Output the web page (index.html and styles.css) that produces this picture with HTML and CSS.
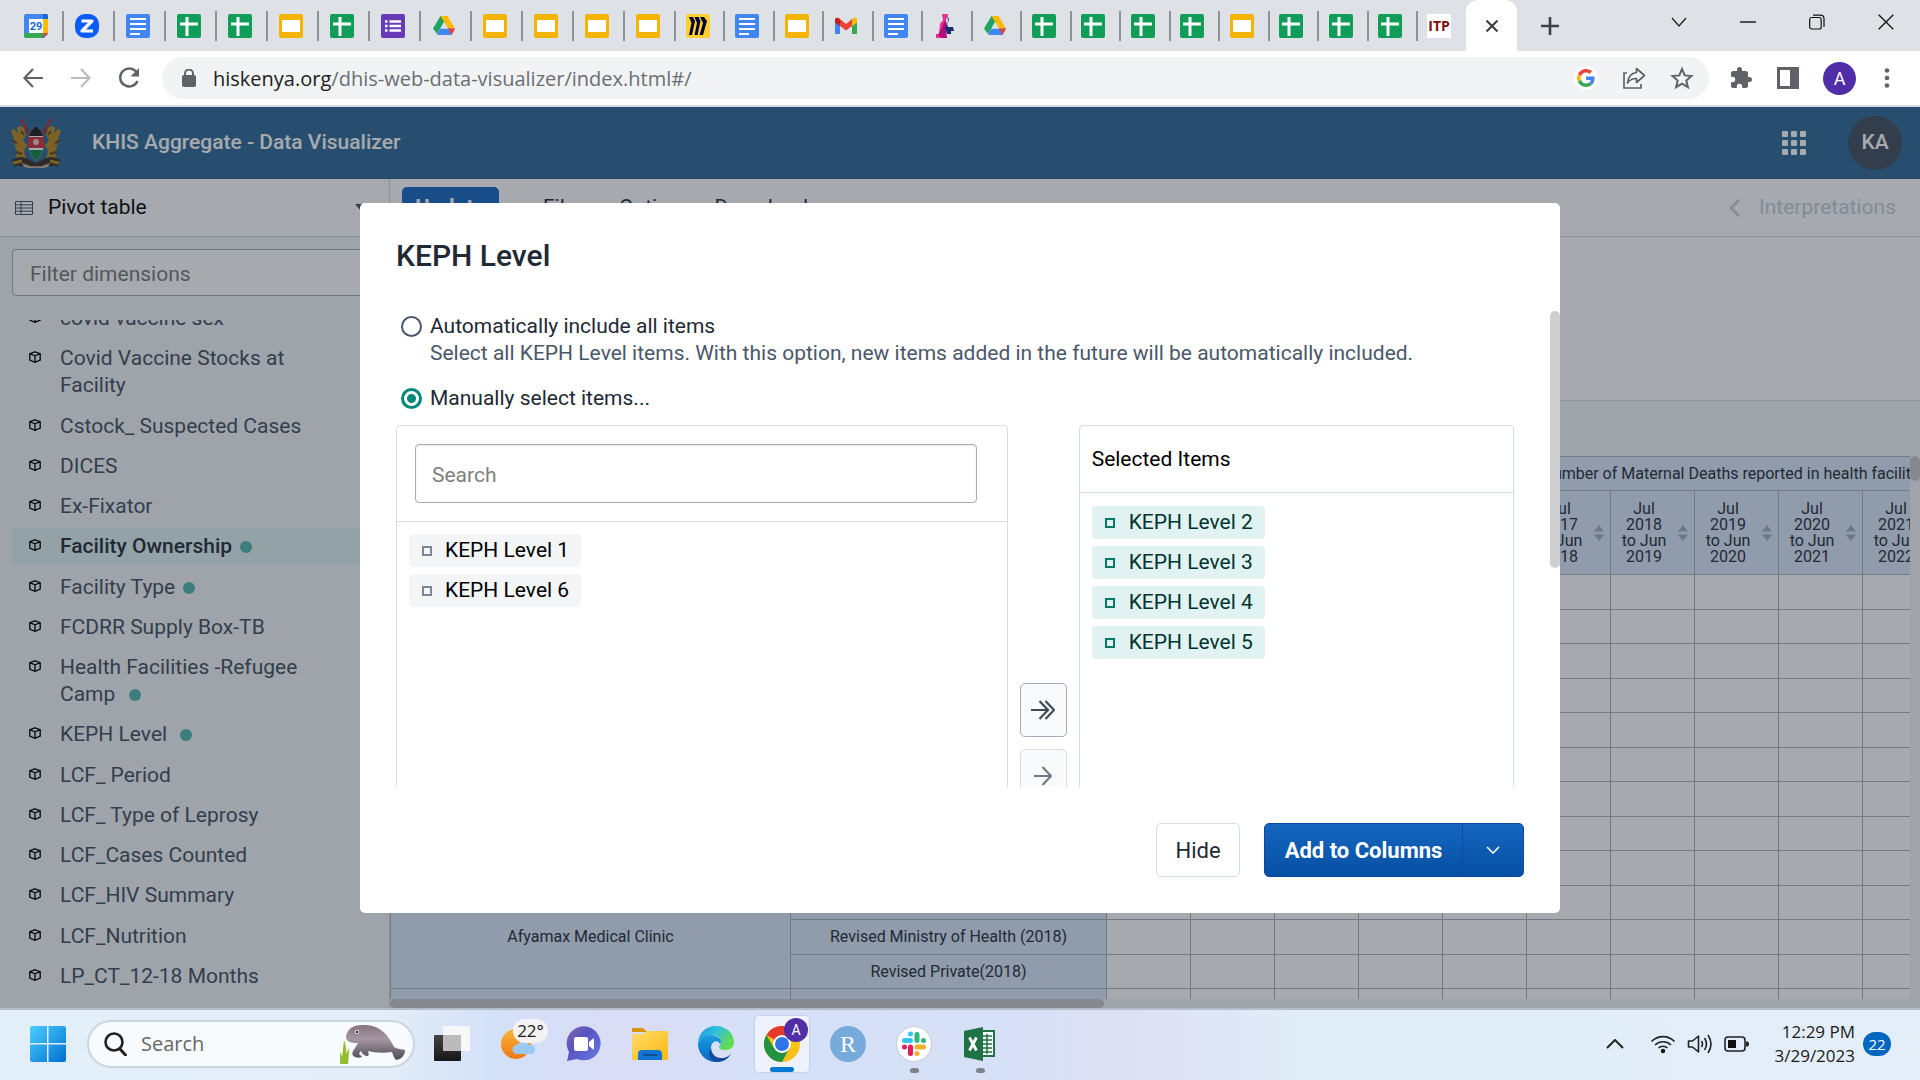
FILE: index.html
```html
<!DOCTYPE html>
<html lang="en">
<head>
<meta charset="utf-8">
<title>KHIS Aggregate - Data Visualizer</title>
<link rel="stylesheet" href="styles.css">
</head>
<body>
<svg class="sprite" aria-hidden="true">
  <symbol id="docs" viewBox="0 0 24 24"><rect width="24" height="24" rx="2" fill="#4285f4"/><path d="M4 5h16M4 10h16M4 15h16M4 20h10" stroke="#fff" stroke-width="2.2"/></symbol>
  <symbol id="sheets" viewBox="0 0 24 24"><rect width="24" height="24" rx="2" fill="#0f9d58"/><path d="M3 10h18M10 3v19" stroke="#fff" stroke-width="3"/></symbol>
  <symbol id="slides" viewBox="0 0 24 24"><rect width="24" height="24" rx="2" fill="#f4b400"/><path d="M3 6h18v12H3z" fill="#fff"/></symbol>
  <symbol id="drive" viewBox="0 0 24 24"><path d="M8.500 2h7L12 8.200 5 20 1 14.500z" fill="#1fa463"/><path d="M8.500 2h7L23 14.500h-7z" fill="#ffba00"/><path d="M8.200 14.500H23L19.500 21H5z" fill="#4285f4"/><path d="M16 14.500h7L19.500 21z" fill="#ea4335"/><path d="M12 8.300l3.600 6.200H8.400z" fill="#dee1e6"/></symbol>
  <symbol id="cube" viewBox="0 0 12 12"><path d="M6 .8l5.200 1.900v6.400L6 11.300.8 9.100V2.700zM.8 2.700L6 4.800l5.200-2.100M6 4.800v6.500" fill="none" stroke="#000" stroke-width="1.400"/></symbol>
  <symbol id="sort" viewBox="0 0 10 16"><path d="M5 0l5 6.500H0zM0 9.500h10L5 16z" fill="#a0adba"/></symbol>
</svg>

<header class="browser">
  <div class="tabstrip">
    <nav class="tabs tabs-wide" aria-label="Pinned tabs">
      <button class="tab" aria-label="Calendar"><svg viewBox="0 0 24 24"><path d="M0 2q0-2 2-2h20q2 0 2 2v18l-4 4H2q-2 0-2-2z" fill="#4285f4"/><path d="M19 5h5v14h-5z" fill="#fbbc04"/><path d="M5 19h14v5H2q-2 0-2-2v-3z" fill="#34a853"/><path d="M19 19h5l-5 5z" fill="#ea4335"/><path d="M19 0h3q2 0 2 2v3h-5z" fill="#1967d2"/><path d="M5 5h14v14H5z" fill="#fff"/><text x="12" y="16" class="cal-day">29</text></svg></button>
      <button class="tab" aria-label="Zoom"><svg viewBox="0 0 24 24"><rect width="24" height="24" rx="10" fill="#0b5cff"/><path d="M6.500 7h10.500l-10 10h11" fill="none" stroke="#fff" stroke-width="3.200" stroke-linejoin="round"/></svg></button>
      <button class="tab" aria-label="Docs"><svg><use href="#docs"/></svg></button>
      <button class="tab" aria-label="Sheets"><svg><use href="#sheets"/></svg></button>
      <button class="tab" aria-label="Sheets"><svg><use href="#sheets"/></svg></button>
      <button class="tab" aria-label="Slides"><svg><use href="#slides"/></svg></button>
      <button class="tab" aria-label="Sheets"><svg><use href="#sheets"/></svg></button>
      <button class="tab" aria-label="Forms"><svg viewBox="0 0 24 24"><rect width="24" height="24" rx="2" fill="#673ab7"/><path d="M8.500 7.500H20M8.500 12H20M8.500 16.500H20M4 7.500h2.500M4 12h2.500M4 16.500h2.500" stroke="#fff" stroke-width="2.400"/></svg></button>
      <button class="tab" aria-label="Drive"><svg><use href="#drive"/></svg></button>
      <button class="tab" aria-label="Slides"><svg><use href="#slides"/></svg></button>
      <button class="tab" aria-label="Slides"><svg><use href="#slides"/></svg></button>
      <button class="tab" aria-label="Slides"><svg><use href="#slides"/></svg></button>
      <button class="tab" aria-label="Slides"><svg><use href="#slides"/></svg></button>
    </nav>
    <nav class="tabs tabs-narrow" aria-label="Open tabs">
      <button class="tab" aria-label="Miro"><svg viewBox="0 0 24 24"><rect width="24" height="24" rx="2" fill="#ffd02f"/><path d="M3 3h4l2 4-3 14H3l2.500-12zM8.500 3h4l2 4-3 14h-3L11 9zM14 3h4l3 4-4 14h-3.500L17 9z" fill="#050038"/></svg></button>
      <button class="tab" aria-label="Docs"><svg><use href="#docs"/></svg></button>
      <button class="tab" aria-label="Slides"><svg><use href="#slides"/></svg></button>
      <button class="tab" aria-label="Gmail"><svg viewBox="0 0 24 24"><path d="M1 6v14h5V10z" fill="#4285f4"/><path d="M23 6v14h-5V10z" fill="#34a853"/><path d="M18 5l2-1.200q3-1 3 2.200v2.500L18 12z" fill="#fbbc04"/><path d="M6 5L4 3.800Q1 3 1 6v2.500L6 12z" fill="#c5221f"/><path d="M6 5l6 5 6-5v7l-6 4.500L6 12z" fill="#ea4335"/></svg></button>
      <button class="tab" aria-label="Docs"><svg><use href="#docs"/></svg></button>
      <button class="tab" aria-label="Lighthouse"><svg viewBox="0 0 24 24"><path d="M9 0h6l-3 9 1 10v5H3v-4h3L7 10l3-4z" fill="#ec2f91"/><path d="M12 6l2 4-1 6 1 8H9l-4-3 4-8z" fill="#b30c78"/><path d="M14 0l2 6-2 4 1 3h5l1 4h-3v3h-4l-2-6 3-7z" fill="#1b2d70"/></svg></button>
      <button class="tab" aria-label="Drive"><svg><use href="#drive"/></svg></button>
      <button class="tab" aria-label="Sheets"><svg><use href="#sheets"/></svg></button>
      <button class="tab" aria-label="Sheets"><svg><use href="#sheets"/></svg></button>
      <button class="tab" aria-label="Sheets"><svg><use href="#sheets"/></svg></button>
      <button class="tab" aria-label="Sheets"><svg><use href="#sheets"/></svg></button>
      <button class="tab" aria-label="Slides"><svg><use href="#slides"/></svg></button>
      <button class="tab" aria-label="Sheets"><svg><use href="#sheets"/></svg></button>
      <button class="tab" aria-label="Sheets"><svg><use href="#sheets"/></svg></button>
      <button class="tab" aria-label="Sheets"><svg><use href="#sheets"/></svg></button>
      <button class="tab" aria-label="ITP"><span class="itp">ITP</span></button>
    </nav>
    <button class="tab-active" aria-label="Close tab"><svg width="14" height="14" viewBox="0 0 14 14"><path d="M1.500 1.500l11 11m0-11l-11 11" stroke="#3c4043" stroke-width="2.200"/></svg></button>
    <button class="new-tab" aria-label="New tab"><svg width="18" height="18" viewBox="0 0 18 18"><path d="M9 0v18M0 9h18" stroke="#3c4043" stroke-width="2.600"/></svg></button>
    <div class="window-controls">
      <button aria-label="Search tabs"><svg width="16" height="16" viewBox="0 0 16 16"><path d="M1 4l7 8 7-8" fill="none" stroke="#222" stroke-width="1.300"/></svg></button>
      <button aria-label="Minimise"><svg width="16" height="16" viewBox="0 0 16 16"><path d="M0 8h16" stroke="#111" stroke-width="1.400"/></svg></button>
      <button aria-label="Restore"><svg width="16" height="16" viewBox="0 0 16 16"><rect x=".7" y="3.500" width="11.500" height="11.500" rx="2" fill="none" stroke="#111" stroke-width="1.200"/><path d="M4 1.200h7.500q3.500 0 3.500 3.500V13" fill="none" stroke="#111" stroke-width="1.200"/></svg></button>
      <button aria-label="Close"><svg width="16" height="16" viewBox="0 0 16 16"><path d="M.7.700l14.600 14.600M15.300.700L.7 15.300" stroke="#111" stroke-width="1.300"/></svg></button>
    </div>
  </div>
  <div class="toolbar">
    <div class="nav-buttons">
      <button aria-label="Back"><svg width="20" height="20" viewBox="0 0 20 20"><path d="M20 10H2M10 1L1.500 10l8.500 9" fill="none" stroke="#5f6368" stroke-width="2.200"/></svg></button>
      <button aria-label="Forward" disabled><svg width="20" height="20" viewBox="0 0 20 20"><path d="M0 10h18M10 1l8.500 9-8.500 9" fill="none" stroke="#babcbe" stroke-width="2.200"/></svg></button>
      <button aria-label="Reload"><svg width="22" height="22" viewBox="0 0 22 22"><path d="M19 6A9 9 0 1 0 19.500 14" fill="none" stroke="#5f6368" stroke-width="2.400"/><path d="M21 1v8.500h-8.500z" fill="#5f6368"/></svg></button>
    </div>
    <div class="omnibox">
      <svg width="14" height="18" viewBox="0 0 14 18"><rect y="6" width="14" height="12" rx="2" fill="#5f6368"/><path d="M3 7V4.500a4 4 0 0 1 8 0V7" fill="none" stroke="#5f6368" stroke-width="2"/></svg>
      <p class="url"><b>hiskenya.org</b>/dhis-web-data-visualizer/index.html#/</p>
      <button class="g" aria-label="Google Search"><svg width="18" height="18" viewBox="0 0 48 48"><path fill="#EA4335" d="M24 9.500c3.540 0 6.710 1.220 9.210 3.600l6.850-6.850C35.900 2.380 30.470 0 24 0 14.620 0 6.510 5.380 2.560 13.220l7.980 6.190C12.430 13.720 17.740 9.500 24 9.500z"/><path fill="#4285F4" d="M46.980 24.550c0-1.570-.15-3.090-.38-4.550H24v9.020h12.940c-.58 2.960-2.260 5.480-4.780 7.180l7.730 6c4.510-4.180 7.090-10.360 7.090-17.650z"/><path fill="#FBBC05" d="M10.530 28.590c-.48-1.450-.76-2.990-.76-4.590s.27-3.140.76-4.590l-7.980-6.190C.92 16.460 0 20.120 0 24c0 3.880.92 7.540 2.560 10.780l7.970-6.190z"/><path fill="#34A853" d="M24 48c6.480 0 11.930-2.130 15.890-5.810l-7.730-6c-2.150 1.450-4.920 2.300-8.160 2.300-6.260 0-11.570-4.220-13.470-9.910l-7.980 6.190C6.510 42.620 14.620 48 24 48z"/></svg></button>
      <button aria-label="Share"><svg width="24" height="24" viewBox="0 0 24 24"><path d="M5 7H2v15h17v-4" fill="none" stroke="#5f6368" stroke-width="1.700"/><path d="M14.500 2.500l8 7-8 7v-4q-6 0-9 4.500 1-9.500 9-10.500z" fill="none" stroke="#5f6368" stroke-width="1.700" stroke-linejoin="round"/></svg></button>
      <button aria-label="Bookmark"><svg width="24" height="24" viewBox="0 0 24 24"><path d="M12 3l2.700 6.400 6.800.600-5.200 4.500 1.600 6.700L12 17.600l-5.900 3.600 1.600-6.700L2.500 10l6.800-.600z" fill="none" stroke="#5f6368" stroke-width="2"/></svg></button>
    </div>
    <div class="extensions">
      <button aria-label="Extensions"><svg width="24" height="24" viewBox="0 0 24 24"><path fill="#5f6368" d="M20.500 11H19V7c0-1.100-.9-2-2-2h-4V3.500a2.500 2.500 0 0 0-5 0V5H4c-1.100 0-2 .9-2 2v3.800h1.500a2.700 2.700 0 0 1 0 5.400H2V20c0 1.100.9 2 2 2h3.800v-1.500a2.700 2.700 0 0 1 5.400 0V22H17c1.100 0 2-.9 2-2v-4h1.500a2.500 2.500 0 0 0 0-5z"/></svg></button>
      <button aria-label="Side panel"><svg width="22" height="22" viewBox="0 0 22 22"><path fill="#5f6368" fill-rule="evenodd" d="M0 0h22v22H0zM3 3v16h10V3z"/></svg></button>
      <button class="profile" aria-label="Profile">A</button>
      <button aria-label="Menu"><svg width="6" height="20" viewBox="0 0 6 20"><circle cx="3" cy="2.500" r="2.300" fill="#5f6368"/><circle cx="3" cy="10" r="2.300" fill="#5f6368"/><circle cx="3" cy="17.500" r="2.300" fill="#5f6368"/></svg></button>
    </div>
  </div>
</header>

<div class="app">
  <header class="dhis-header">
    <a class="crest" href="#" aria-label="Home"><svg width="54" height="50" viewBox="0 0 54 50">
      <path d="M12 1l14 26M42 1L28 27" stroke="#b5282f" stroke-width="2.500"/>
      <path d="M4 18q-4-6 1-7l4 4-1-6q4-2 7 1l2 7-3 5 4 5-3 6 3 11H5l3-8-2-9z" fill="#b9851c"/>
      <path d="M50 18q4-6-1-7l-4 4 1-6q-4-2-7 1l-2 7 3 5-4 5 3 6-3 11h13l-3-8 2-9z" fill="#b9851c"/>
      <path d="M3 22l5 3M7 34l6 2M51 22l-5 3M47 34l-6 2M12 13l3 4M42 13l-3 4" stroke="#5d3d10" stroke-width="2"/>
      <path d="M27 8q8 7 8 17t-8 18q-8-8-8-18T27 8z" fill="#fff"/>
      <path d="M27 8q5 4 7 10H20q2-6 7-10z" fill="#16181a"/><path d="M19 19h16v11H19z" fill="#d32f3b"/><path d="M20 32h14q-2 6-7 11-5-5-7-11z" fill="#128040"/>
      <circle cx="27" cy="24" r="3" fill="#f2c6c0"/>
      <path d="M3 42q8-6 18 0l6 3 6-3q10-6 18 0l-2 6H5z" fill="#3a2a20"/><path d="M4 45l9-2M50 45l-9-2" stroke="#b9851c" stroke-width="3"/>
      <path d="M13 45q14 7 28 0l-2 4q-12 3-24 0z" fill="#c9aa9a"/>
    </svg></a>
    <h1>KHIS Aggregate - Data Visualizer</h1>
    <button class="apps" aria-label="Apps"><svg width="24" height="24" viewBox="0 0 24 24" fill="#fff"><rect width="6" height="6" rx="1"/><rect x="9" width="6" height="6" rx="1"/><rect x="18" width="6" height="6" rx="1"/><rect y="9" width="6" height="6" rx="1"/><rect x="9" y="9" width="6" height="6" rx="1"/><rect x="18" y="9" width="6" height="6" rx="1"/><rect y="18" width="6" height="6" rx="1"/><rect x="9" y="18" width="6" height="6" rx="1"/><rect x="18" y="18" width="6" height="6" rx="1"/></svg></button>
    <button class="user">KA</button>
  </header>

  <div class="workspace">
    <aside class="sidebar">
      <button class="vis-type"><svg width="18" height="14" viewBox="0 0 18 14"><path d="M.5.500h17v13H.5zM.5 3.800h17M.5 7h17M.5 10.200h17M6 .500v13" fill="none" stroke="#404b5a"/></svg><span>Pivot table</span><svg width="12" height="7" viewBox="0 0 12 7"><path d="M0 0h12L6 7z" fill="#404b5a"/></svg></button>
      <div class="filter"><input type="text" placeholder="Filter dimensions" aria-label="Filter dimensions"></div>
      <div class="dims">
        <ul>
          <li><svg><use href="#cube"/></svg><span>covid vaccine sex</span></li>
          <li><svg><use href="#cube"/></svg><span>Covid Vaccine Stocks at Facility</span></li>
          <li><svg><use href="#cube"/></svg><span>Cstock_ Suspected Cases</span></li>
          <li><svg><use href="#cube"/></svg><span>DICES</span></li>
          <li><svg><use href="#cube"/></svg><span>Ex-Fixator</span></li>
          <li class="selected"><svg><use href="#cube"/></svg><span>Facility Ownership<i class="dot"></i></span></li>
          <li><svg><use href="#cube"/></svg><span>Facility Type<i class="dot"></i></span></li>
          <li><svg><use href="#cube"/></svg><span>FCDRR Supply Box-TB</span></li>
          <li><svg><use href="#cube"/></svg><span>Health Facilities -Refugee Camp <i class="dot"></i></span></li>
          <li><svg><use href="#cube"/></svg><span>KEPH Level <i class="dot"></i></span></li>
          <li><svg><use href="#cube"/></svg><span>LCF_ Period</span></li>
          <li><svg><use href="#cube"/></svg><span>LCF_ Type of Leprosy</span></li>
          <li><svg><use href="#cube"/></svg><span>LCF_Cases Counted</span></li>
          <li><svg><use href="#cube"/></svg><span>LCF_HIV Summary</span></li>
          <li><svg><use href="#cube"/></svg><span>LCF_Nutrition</span></li>
          <li><svg><use href="#cube"/></svg><span>LP_CT_12-18 Months</span></li>
        </ul>
      </div>
    </aside>

    <main>
      <div class="menubar">
        <button class="update">Update</button>
        <button class="file">File</button>
        <button>Options</button>
        <button>Download</button>
        <button class="interpretations"><svg width="12" height="18" viewBox="0 0 12 18"><path d="M10 1L2 9l8 8" fill="none" stroke="#c2cdd8" stroke-width="2.600"/></svg>Interpretations</button>
      </div>
      <div class="axes"></div>
      <div class="canvas">
        <div class="table-view">
          <table>
            <colgroup><col class="c-unit"><col class="c-owner"><col span="12" class="c-data"></colgroup>
            <thead>
              <tr class="r-metric"><th colspan="2"></th><th colspan="3"></th><th colspan="9">Number of Maternal Deaths reported in health facilities</th></tr>
              <tr class="r-period"><th></th><th></th><th></th><th></th><th></th><th></th><th></th>
                <th><div class="period"><span>Jul 2017 to Jun 2018</span><svg><use href="#sort"/></svg></div></th>
                <th><div class="period"><span>Jul 2018 to Jun 2019</span><svg><use href="#sort"/></svg></div></th>
                <th><div class="period"><span>Jul 2019 to Jun 2020</span><svg><use href="#sort"/></svg></div></th>
                <th><div class="period"><span>Jul 2020 to Jun 2021</span><svg><use href="#sort"/></svg></div></th>
                <th><div class="period"><span>Jul 2021 to Jun 2022</span><svg><use href="#sort"/></svg></div></th>
                <th></th><th></th></tr>
            </thead>
            <tbody>
              <tr><th rowspan="3"></th><th></th><td></td><td></td><td></td><td></td><td></td><td></td><td></td><td></td><td></td><td></td><td></td><td></td></tr>
              <tr><th></th><td></td><td></td><td></td><td></td><td></td><td></td><td></td><td></td><td></td><td></td><td></td><td></td></tr>
              <tr><th></th><td></td><td></td><td></td><td></td><td></td><td></td><td></td><td></td><td></td><td></td><td></td><td></td></tr>
              <tr><th rowspan="3"></th><th></th><td></td><td></td><td></td><td></td><td></td><td></td><td></td><td></td><td></td><td></td><td></td><td></td></tr>
              <tr><th></th><td></td><td></td><td></td><td></td><td></td><td></td><td></td><td></td><td></td><td></td><td></td><td></td></tr>
              <tr><th></th><td></td><td></td><td></td><td></td><td></td><td></td><td></td><td></td><td></td><td></td><td></td><td></td></tr>
              <tr><th rowspan="3"></th><th></th><td></td><td></td><td></td><td></td><td></td><td></td><td></td><td></td><td></td><td></td><td></td><td></td></tr>
              <tr><th></th><td></td><td></td><td></td><td></td><td></td><td></td><td></td><td></td><td></td><td></td><td></td><td></td></tr>
              <tr><th></th><td></td><td></td><td></td><td></td><td></td><td></td><td></td><td></td><td></td><td></td><td></td><td></td></tr>
              <tr><th rowspan="3">Afyamax Medical Clinic</th><th></th><td></td><td></td><td></td><td></td><td></td><td></td><td></td><td></td><td></td><td></td><td></td><td></td></tr>
              <tr><th>Revised Ministry of Health (2018)</th><td></td><td></td><td></td><td></td><td></td><td></td><td></td><td></td><td></td><td></td><td></td><td></td></tr>
              <tr><th>Revised Private(2018)</th><td></td><td></td><td></td><td></td><td></td><td></td><td></td><td></td><td></td><td></td><td></td><td></td></tr>
              <tr><th></th><th></th><td></td><td></td><td></td><td></td><td></td><td></td><td></td><td></td><td></td><td></td><td></td><td></td></tr>
            </tbody>
          </table>
        </div>
        <div class="v-scroll"><i></i></div>
        <div class="h-scroll"><i></i></div>
      </div>
    </main>
  </div>

  <div class="backdrop">
    <section class="modal" role="dialog" aria-labelledby="modal-title">
      <h2 id="modal-title">KEPH Level</h2>
      <div class="modal-body">
        <div class="modal-content">
          <label class="choice"><input type="radio" name="mode"><span>Automatically include all items<small>Select all KEPH Level items. With this option, new items added in the future will be automatically included.</small></span></label>
          <label class="choice"><input type="radio" name="mode" checked><span>Manually select items...</span></label>
          <div class="transfer">
            <div class="source">
              <div class="search-row"><input type="text" placeholder="Search" aria-label="Search"></div>
              <ul class="options"><li><i></i>KEPH Level 1</li><li><i></i>KEPH Level 6</li></ul>
            </div>
            <div class="moves">
              <button aria-label="Select all"><svg width="24" height="20" viewBox="0 0 24 20"><path d="M0 10h17M8.500 1l8.500 9-8.500 9M14.500 1l8.500 9-8.500 9" fill="none" stroke="#404b5a" stroke-width="2.200"/></svg></button>
              <button aria-label="Select" disabled><svg width="18" height="20" viewBox="0 0 18 20"><path d="M0 10h17M8.500 1l8.500 9-8.500 9" fill="none" stroke="#6e7a8a" stroke-width="2.200"/></svg></button>
            </div>
            <div class="picked">
              <h3>Selected Items</h3>
              <ul class="options"><li><i></i>KEPH Level 2</li><li><i></i>KEPH Level 3</li><li><i></i>KEPH Level 4</li><li><i></i>KEPH Level 5</li></ul>
            </div>
          </div>
        </div>
        <div class="modal-scroll"></div>
      </div>
      <footer>
        <button class="hide">Hide</button>
        <div class="split"><button>Add to Columns</button><button aria-label="More"><svg width="14" height="8" viewBox="0 0 14 8"><path d="M1 1l6 6 6-6" fill="none" stroke="#fff" stroke-width="1.600"/></svg></button></div>
      </footer>
    </section>
  </div>
</div>

<footer class="taskbar">
  <div class="launch">
    <button class="start" aria-label="Start"><svg width="36" height="36" viewBox="0 0 36 36"><defs><linearGradient id="win" x2="1" y2="1"><stop stop-color="#4cd0ff"/><stop offset="1" stop-color="#006fd0"/></linearGradient></defs><path d="M0 2q0-2 2-2h15v17H0zM18.500 0H34q2 0 2 2v15H18.500zM0 18.500h17V36H2q-2 0-2-2zM18.500 18.500H36V34q0 2-2 2H18.500z" fill="url(#win)"/></svg></button>
    <label class="task-search">
      <svg width="24" height="24" viewBox="0 0 24 24"><circle cx="11" cy="10" r="8.500" fill="none" stroke="#222" stroke-width="2.600"/><path d="M17 17l5.500 6" stroke="#222" stroke-width="3" stroke-linecap="round"/></svg>
      <input type="text" placeholder="Search" aria-label="Search Windows">
      <svg class="manatee" width="66" height="40" viewBox="0 0 66 40"><defs><linearGradient id="mn" x2="0" y2="1"><stop stop-color="#85747f"/><stop offset=".4" stop-color="#a797a3"/><stop offset="1" stop-color="#4d4a55"/></linearGradient></defs><path d="M7 13C8 5 14 1 23 1c17-1 26 9 32 22 3 2 8 2 11 3 0 5-3 9-9 10-2-2-3-5-4-8-8 1-17 1-24-1 1 3 1 5-1 5-3 0-5-3-6-5-2 2-3 4 1 5 0 2-4 2-7 1-4-2-3-5 0-9l3-5c-6 0-12-1-12-6z" fill="url(#mn)"/><circle cx="18" cy="8" r="2" fill="#fff"/><circle cx="18" cy="8" r="1.200" fill="#222"/><path d="M1 40V28q2 3 2 6l2-18q3 8 2 14l3-6q0 8-1 16z" fill="#96bd2c"/></svg>
    </label>
    <div class="pins">
      <button aria-label="Task view"><svg width="36" height="36" viewBox="0 0 36 36"><defs><linearGradient id="tv" x2="0" y2="1"><stop stop-color="#444"/><stop offset="1" stop-color="#161616"/></linearGradient></defs><rect y="9" width="27" height="26" rx="1" fill="url(#tv)"/><rect x="9" width="27" height="25" rx="1" fill="#f7f7f7"/><path d="M9 9h18v16H9z" fill="#bbb"/></svg></button>
      <button class="weather" aria-label="Weather"><svg width="36" height="36" viewBox="0 0 36 36"><defs><linearGradient id="sn" x2="0" y2="1"><stop stop-color="#f8b637"/><stop offset="1" stop-color="#f07818"/></linearGradient></defs><circle cx="16" cy="18" r="15" fill="url(#sn)"/><path d="M17 28a4.500 4.500 0 0 1 0-9 7 7 0 0 1 12 0 4.500 4.500 0 0 1 3 9z" fill="#9cc9f4"/></svg><span>22°</span></button>
      <button aria-label="Chat"><svg width="36" height="36" viewBox="0 0 36 36"><defs><linearGradient id="ct" x2="1" y2="1"><stop stop-color="#8a66a8"/><stop offset=".4" stop-color="#5555c4"/><stop offset="1" stop-color="#6a7be0"/></linearGradient></defs><path d="M1 35l2-9A17 17 0 1 1 11 33z" fill="url(#ct)"/><rect x="8" y="11" width="14" height="14" rx="2" fill="#fff"/><path d="M23 16l5-4v12l-5-4z" fill="#fff"/></svg></button>
      <button aria-label="File Explorer"><svg width="36" height="36" viewBox="0 0 36 36"><defs><linearGradient id="fo" x2="1" y2="1"><stop stop-color="#ffdd6e"/><stop offset="1" stop-color="#f9b90f"/></linearGradient></defs><path d="M0 3q0-1 1-1h10l4 4H0z" fill="#dc9400"/><path d="M0 8h11l4-3h21v28q0 1-1 1H1q-1 0-1-1z" fill="url(#fo)"/><path d="M6 34V28q0-4 4-4h16q4 0 4 4v6z" fill="#1174d0"/><path d="M11 29h14" stroke="#064b8c" stroke-width="1.800"/></svg></button>
      <button aria-label="Edge"><svg width="36" height="36" viewBox="0 0 36 36"><defs><linearGradient id="e1" x2="1" y2=".5"><stop stop-color="#1d92d6"/><stop offset=".5" stop-color="#2fc2dd"/><stop offset="1" stop-color="#64dc50"/></linearGradient><linearGradient id="e2" x2="0" y2="1"><stop stop-color="#1c9de0"/><stop offset="1" stop-color="#0a66c4"/></linearGradient></defs><path d="M0 18C0 6 9 0 18 0c11 0 18 8 18 16 0 6-4 8-9 8-4 0-6-1-6-3 0-1 2-2 2-5 0-4-4-7-9-7C7 9 0 13 0 18z" fill="url(#e1)"/><path d="M0 18c1-6 7-9 12-9 6 0 11 3 11 7 0 1-1 2-1 2-2-5-9-3-9 4s6 11 10 13c-2 1-4 1-5 1C8 36 0 28 0 18z" fill="url(#e2)"/><path d="M13 22c0 6 5 10 10 10 5 0 9-2 11-6-3 7-9 10-15 10-7-1-10-9-6-14z" fill="#124a9c"/></svg></button>
      <button class="current" aria-label="Chrome"><svg width="36" height="36" viewBox="0 0 36 36"><circle cx="18" cy="18" r="18" fill="#fbc116"/><path d="M18 18L2.400 9A18 18 0 0 1 33.600 9z" fill="#e33b2e"/><path d="M2.400 9A18 18 0 0 0 18 36l7.500-14L18 18 10 22z" fill="#229342"/><path d="M18 9h15.600" stroke="#e33b2e" stroke-width="2"/><circle cx="18" cy="18" r="9" fill="#fff"/><circle cx="18" cy="18" r="7" fill="#2e73e8"/></svg><b>A</b></button>
      <button class="rstudio" aria-label="RStudio"><span>R</span></button>
      <button class="running" aria-label="Slack"><svg width="36" height="36" viewBox="0 0 36 36"><circle cx="18" cy="18" r="17.500" fill="#fff" stroke="#c8c8d0"/><g stroke-width="5" stroke-linecap="round"><path d="M8.500 14.500h6M14.500 8v0" stroke="#36c5f0"/><path d="M21 8.500v6M27.500 14.500v0" stroke="#2eb67d"/><path d="M21 21h6.500M21 27.500v0" stroke="#ecb22e"/><path d="M14.500 21v6.500M8.500 21v0" stroke="#e01e5a"/></g></svg></button>
      <button class="running" aria-label="Excel"><svg width="36" height="36" viewBox="0 0 36 36"><path d="M18 5h14v25H18z" fill="#fff" stroke="#1f7244" stroke-width="2"/><path d="M20 10h10M20 14h10M20 18h10M20 22h10M20 26h10M25 8v20" stroke="#1f7244" stroke-width="1.500"/><path d="M2 5l19-4v34L2 31z" fill="#1f7244"/><path d="M7.500 11.500l7 13m0-13l-7 13" stroke="#fff" stroke-width="2.800"/></svg></button>
    </div>
  </div>
  <div class="tray">
    <button aria-label="Hidden icons"><svg width="18" height="10" viewBox="0 0 18 10"><path d="M1 9l8-8 8 8" fill="none" stroke="#222" stroke-width="2"/></svg></button>
    <button class="quick" aria-label="Quick settings">
      <svg width="26" height="20" viewBox="0 0 26 20"><path d="M1.500 7.500a16 16 0 0 1 23 0M5 11a11.500 11.500 0 0 1 16 0M8.500 14a6.500 6.500 0 0 1 9 0" fill="none" stroke="#222" stroke-width="1.600"/><circle cx="13" cy="17" r="2.200" fill="#111"/></svg>
      <svg width="26" height="20" viewBox="0 0 26 20"><path d="M1.500 7h4l6-5v16l-6-5h-4z" fill="none" stroke="#222" stroke-width="1.600" stroke-linejoin="round"/><path d="M14.500 7q2 3 0 6M17.500 4q4 6 0 12M21 1q6 9 0 18" fill="none" stroke="#222" stroke-width="1.600"/></svg>
      <svg width="26" height="20" viewBox="0 0 26 20"><rect x="1" y="3" width="20" height="14" rx="3" fill="none" stroke="#222" stroke-width="1.600"/><rect x="4" y="6" width="8" height="8" fill="#111"/><path d="M22 7.500h1.500q1.500 0 1.500 2.500t-1.500 2.500H22z" fill="#222"/></svg>
    </button>
    <time><span>12:29 PM</span><span>3/29/2023</span></time>
    <button class="count" aria-label="Notifications">22</button>
  </div>
</footer>
</body>
</html>
```
FILE: styles.css
```css
* { box-sizing: border-box; }
body {
  margin: 0;
  height: 100vh;
  display: flex;
  flex-direction: column;
  overflow: hidden;
  font: 21px/27px Roboto, sans-serif;
  color: #212934;
}
button, input { font: inherit; color: inherit; }
button { border: 0; padding: 0; background: none; display: flex; align-items: center; justify-content: center; }
ul { list-style: none; margin: 0; padding: 0; }
h1, h2, h3, p { margin: 0; font-weight: 400; }
svg { flex: none; display: block; }
.sprite { position: absolute; width: 0; height: 0; }

/* Browser chrome */
.tabstrip { height: 51px; display: flex; background: #dee1e6; padding-left: 13px; }
.tabs { display: flex; align-items: center; }
.tabs-wide { flex: 0 1 663px; }
.tabs-narrow { flex: 0 1 790px; }
.tab { flex: 1; height: 30px; border-right: 2px solid #8f9296; padding-right: 4px; }
.tabs-narrow .tab:last-child { flex: 0 0 48px; border-color: transparent; }
.tab svg { width: 24px; height: 24px; }
.cal-day { font: 700 11px Roboto, sans-serif; fill: #1967d2; text-anchor: middle; }
.itp { width: 24px; height: 24px; background: #fff; color: #7d0c0c; font: 700 14px/24px "Open Sans", sans-serif; text-align: center; display: flex; justify-content: center; }
.tab-active { width: 51px; background: #fff; border-radius: 12px 12px 0 0; }
.new-tab { width: 66px; }
.window-controls { margin-left: auto; display: flex; padding-bottom: 8px; }
.window-controls button { width: 69px; }
.toolbar { height: 56px; display: flex; align-items: center; background: #fff; border-bottom: 2px solid #dadce0; }
.nav-buttons { flex: none; width: 162px; padding: 0 22px 0 23px; display: flex; justify-content: space-between; }
.omnibox { flex: 1; height: 42px; border-radius: 21px; background: #f1f3f4; display: flex; align-items: center; padding: 0 15px 0 20px; gap: 24px; }
.url { flex: 1; margin-left: -7px; padding-top: 2px; font: 20px/28px "Open Sans", sans-serif; color: #6a6e73; }
.url b { font-weight: 400; color: #202124; }
.g { width: 24px; height: 24px; border-radius: 50%; background: #fff; }
.extensions { display: flex; align-items: center; gap: 24px; padding: 0 30px 0 20px; }
.profile { width: 33px; height: 33px; border-radius: 50%; background: #512da8; color: #fff; font-size: 18px; margin-right: 4px; }

/* App */
.app { flex: 1; min-height: 0; position: relative; display: flex; flex-direction: column; border-bottom: 2px solid #b4bcc8; }
.dhis-header { flex: none; height: 72px; display: flex; align-items: center; background: #2c6693; color: #fff; border-bottom: 1px solid #265a85; }
.crest { width: 74px; height: 71px; display: flex; align-items: center; padding-left: 9px; border-right: 1px solid #285c86; }
.dhis-header h1 { flex: 1; margin-left: 18px; font-size: 21px; font-weight: 500; }
.apps { margin-right: 42px; }
.user { width: 54px; height: 54px; border-radius: 50%; background: #404b5a; font-weight: 500; margin-right: 18px; }
.workspace { flex: 1; min-height: 0; display: flex; }
.sidebar { flex: none; width: 390px; background: #f4f6f8; border-right: 1px solid #d0d6de; display: flex; flex-direction: column; }
.vis-type { flex: none; height: 58px; background: #fff; border-bottom: 1px solid #d0d6de; padding: 0 22px 0 15px; gap: 15px; color: #000; }
.vis-type span { flex: 1; text-align: left; }
.filter { flex: none; padding: 12px; }
.filter input { display: block; width: 100%; height: 47px; border: 1px solid #a0adba; border-radius: 4px; background: #fff; padding: 2px 17px 0; }
.filter input::placeholder { color: #757575; }
.dims { flex: 1; min-height: 0; overflow: hidden; margin-top: 12px; padding: 0 12px; }
.dims ul { margin-top: -20px; min-height: 695px; display: flex; flex-direction: column; justify-content: space-between; }
.dims li { min-height: 36px; display: flex; gap: 19px; padding: 5px 60px 5px 17px; color: #404b5a; border-radius: 3px; }
.dims svg { width: 12px; height: 12px; margin-top: 6px; }
.dims .selected { background: #e0f2f1; color: #212934; font-weight: 500; }
.dot { display: inline-block; width: 12px; height: 12px; border-radius: 50%; background: #4db6ac; margin-left: 8px; }
main { flex: 1; min-width: 0; display: flex; flex-direction: column; background: #fff; }
.menubar { flex: none; height: 58px; border-bottom: 1px solid #d0d6de; display: flex; align-items: center; padding: 0 24px 0 12px; gap: 23px; }
.update { height: 41px; width: 97px; border-radius: 5px; background: #1565c0; color: #fff; font-size: 22px; font-weight: 700; margin-right: 21px; }
.file { margin-right: 20px; }
.interpretations { margin-left: auto; gap: 18px; color: #c2cdd8; }
.axes { flex: none; height: 163px; }
.canvas { flex: 1; min-height: 0; background: #f4f6f8; border-top: 1px solid #d5dde5; padding-top: 55px; display: grid; grid-template: minmax(0, 1fr) 9px / minmax(0, 1fr) 10px; }
.table-view { overflow: hidden; background: #fff; }
table { table-layout: fixed; width: 1725px; border-collapse: collapse; font-size: 16px; line-height: 16px; }
.c-unit { width: 400px; }
.c-owner { width: 316px; }
.c-data { width: 84px; }
.r-metric { height: 34px; }
.r-period { height: 84px; }
tbody tr { height: 35px; }
tbody tr:nth-child(even) { height: 34px; }
th, td { border: 1px solid #acb0b3; padding: 0; }
th { background: #dae6f8; font-weight: 400; }
.period { display: flex; align-items: center; justify-content: flex-end; gap: 10px; padding-right: 6px; }
.period span { width: 48px; }
.period svg { width: 10px; height: 16px; }
.v-scroll { background: #f4f6f8; }
.v-scroll i { display: block; height: 25px; border-radius: 5px; background: #c9c9c9; }
.h-scroll i { display: block; width: 47%; height: 9px; border-radius: 5px; background: #c9c9c9; }

/* Modal */
.backdrop { position: absolute; inset: 0; background: rgba(33, 43, 54, .4); display: flex; justify-content: center; align-items: flex-start; padding-top: 96px; }
.modal { width: 1200px; max-width: 90%; background: #fff; border-radius: 5px; padding: 36px 0; }
.modal h2 { padding: 0 36px; font-size: 30px; line-height: 34px; font-weight: 500; margin-bottom: 38px; }
.modal-body { height: 476px; overflow: hidden; display: flex; padding-left: 36px; }
.modal-content { flex: 1; margin-right: 36px; }
.choice { display: flex; gap: 8px; padding-left: 5px; margin: 2px 0 18px; }
.choice input { appearance: none; flex: none; margin: 3px 0; width: 21px; height: 21px; border: 2px solid #4a5768; border-radius: 50%; }
.choice input:checked { border: 3px solid #00897b; background: radial-gradient(circle, #00897b 4px, #fff 5px); }
.choice small { display: block; font-size: 21px; color: #4a5768; }
.choice + .choice { margin-bottom: 13px; }
.transfer { display: flex; height: 520px; }
.source, .picked { border: 1px solid #d5dde5; border-radius: 4px; }
.source { flex: 612; }
.picked { flex: 435; }
.search-row { padding: 18px 30px 18px 18px; border-bottom: 1px solid #d5dde5; }
.search-row input { display: block; width: 100%; height: 59px; border: 1px solid #a0adba; border-radius: 4px; padding: 2px 16px 0; box-shadow: inset 0 1px 2px rgba(48, 54, 60, .1); }
.search-row input::placeholder { color: #808080; }
.picked h3 { height: 67px; padding: 20px 12px; font-size: 21px; border-bottom: 1px solid #d5dde5; color: #000; }
.options { padding: 12px; display: flex; flex-direction: column; align-items: flex-start; gap: 7px; }
.options li { height: 33px; display: flex; align-items: center; gap: 13px; padding: 0 12px 0 13px; border-radius: 4px; background: #f3f5f7; color: #000; }
.options i { width: 10px; height: 10px; border: 2px solid #7a8797; }
.picked .options { padding-top: 13px; }
.picked .options li { gap: 14px; background: #e0f2f1; color: #00352f; }
.picked .options i { border-color: #00796b; }
.moves { flex: 0 0 71px; padding: 258px 12px 0; display: flex; flex-direction: column; gap: 12px; }
.moves button { height: 54px; border: 1px solid #a0adba; border-radius: 5px; background: #f9fafb; }
.moves button:disabled { border-color: #d5dde5; }
.modal-scroll { width: 10px; height: 257px; border-radius: 5px; background: #cfcfcf; }
.modal footer { padding: 36px 36px 0; display: flex; justify-content: flex-end; gap: 24px; font-size: 22px; }
.hide { width: 84px; height: 54px; border: 1px solid #d5dde5; border-radius: 5px; }
.split { display: flex; height: 54px; border: 1px solid #0d47a1; border-radius: 5px; background: linear-gradient(#1565c0, #0650a3); color: #fff; font-weight: 700; }
.split button:first-child { width: 198px; border-right: 1px solid #0d47a1; }
.split button:last-child { width: 60px; }

/* Taskbar */
.taskbar { flex: none; height: 70px; padding-bottom: 2px; display: flex; justify-content: space-between; align-items: center; background: linear-gradient(90deg, #e2eef8 0%, #e2edf8 20%, #d3e1f8 26%, #d9dcf5 32%, #d5e1f8 40%, #d6e0f7 52%, #dde0f3 58%, #e0ecf8 68%, #e3eef9 100%); font: 20px/24px "Open Sans", sans-serif; color: #1b1b1b; }
.launch, .pins, .tray, .quick { display: flex; align-items: center; }
.start { width: 36px; height: 36px; margin: 0 21px 0 30px; }
.task-search { width: 328px; height: 48px; border: 2px solid #c9d6e2; border-radius: 24px; background: #f8fbfd; display: flex; align-items: center; padding: 0 8px 0 14px; }
.task-search input { flex: 1; min-width: 0; border: 0; outline: 0; background: none; padding: 0 0 0 14px; }
.task-search input::placeholder { color: #666; }
.pins { margin-left: 4px; }
.pins button { width: 66px; height: 58px; position: relative; }
.weather span { position: absolute; left: 28px; top: 4px; width: 35px; height: 24px; border-radius: 12px; background: #f4f2f4; font-size: 17px; text-align: center; }
.pins .current { width: 56px; margin: 0 5px; border: 1px solid #c6d4ea; border-radius: 5px; background: #edf2fc; }
.current b { position: absolute; right: 1px; top: 2px; width: 24px; height: 24px; border-radius: 50%; background: #512da8; color: #fff; font: 14px/24px Roboto, sans-serif; }
.current::after, .running::after { content: ""; position: absolute; bottom: 0; height: 5px; border-radius: 3px; width: 9px; background: #7d828c; }
.current::after { width: 24px; background: #0078d4; }
.rstudio span { width: 36px; height: 36px; border-radius: 50%; background: #75aadb; color: #fff; font: 24px/36px "Liberation Serif", serif; }
.tray { padding-right: 29px; }
.quick { gap: 11px; margin: 0 24px 0 26px; }
.tray time { display: flex; flex-direction: column; align-items: flex-end; font-size: 17px; margin-right: 8px; }
.count { width: 28px; height: 24px; border-radius: 12px; background: #0067c0; color: #fff; font-size: 15px; }
```
